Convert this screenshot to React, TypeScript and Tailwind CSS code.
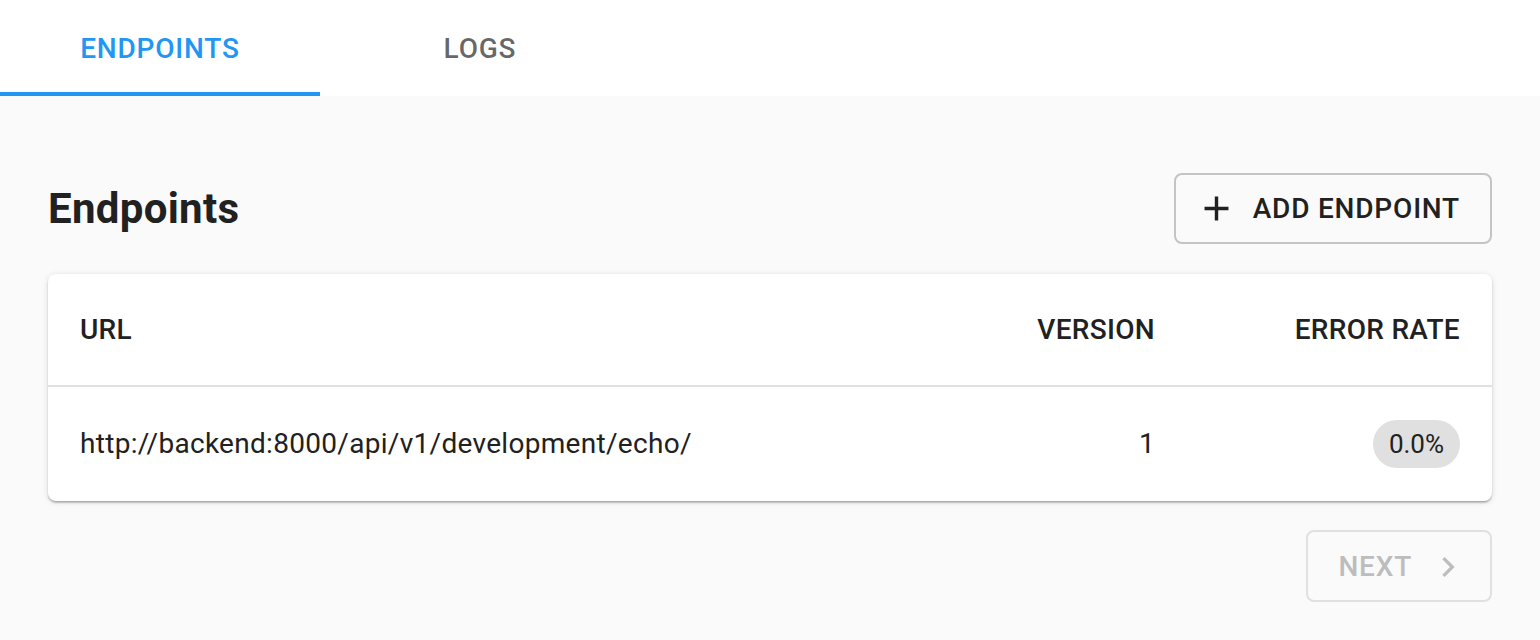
import React from "react";

export default function App() {
  const font = { fontFamily: "Roboto, 'Liberation Sans', sans-serif" };
  return (
    <div className="w-[1540px] h-[640px] bg-[#fafafa] overflow-hidden" style={font}>
      <div className="flex h-[96px] bg-white">
        <div className="relative flex w-[320px] items-center justify-center pt-[2px] text-[28px] font-medium tracking-[0.8px] text-[#2196f3]">
          ENDPOINTS
          <div className="absolute bottom-0 left-0 h-[4px] w-full bg-[#2196f3]" />
        </div>
        <div className="flex w-[320px] items-center justify-center pt-[2px] text-[28px] font-medium tracking-[0.8px] text-[#0009]">
          LOGS
        </div>
      </div>
      <div className="px-[48px] pt-[77px]">
        <div className="flex items-center justify-between">
          <h1 className="text-[42px] font-bold leading-none text-[#212121] tracking-[0.3px]">Endpoints</h1>
          <button className="flex h-[71px] items-center rounded-[8px] border-2 border-[#c4c4c4] pl-[20px] pr-[30px] text-[28px] font-medium tracking-[0.8px] text-[#212121]">
            <svg width="41" height="41" viewBox="0 0 24 24" fill="currentColor" className="mr-[16px]">
              <path d="M19 13h-6v6h-2v-6H5v-2h6V5h2v6h6v2z" />
            </svg>
            ADD ENDPOINT
          </button>
        </div>
        <div className="mt-[30px] rounded-[8px] bg-white shadow-[0_2px_2px_-1px_rgba(0,0,0,0.2),0_2px_2px_0_rgba(0,0,0,0.14),0_1px_6px_0_rgba(0,0,0,0.12)]">
          <div className="flex h-[113px] items-center border-b-2 border-[#e0e0e0] px-[32px] text-[28px] font-medium tracking-[0.3px] text-[#212121]">
            <div className="flex-1">URL</div>
            <div className="w-[300px] text-right">VERSION</div>
            <div className="w-[305px] text-right">ERROR RATE</div>
          </div>
          <div className="flex h-[114px] items-center px-[32px] text-[28px] tracking-[0.3px] text-[#212121]">
            <div className="flex-1">http://backend:8000/api/v1/development/echo/</div>
            <div className="w-[300px] text-right">1</div>
            <div className="flex w-[305px] justify-end">
              <span className="flex h-[48px] items-center rounded-full bg-[#e0e0e0] px-[16px] text-[26px] tracking-normal">0.0%</span>
            </div>
          </div>
        </div>
        <div className="mt-[29px] flex justify-end">
          <button className="flex h-[72px] items-center rounded-[8px] border-2 border-[#e0e0e0] pl-[30px] pr-[22px] pt-[2px] text-[28px] font-medium tracking-[0.8px] text-[#bdbdbd]">
            NEXT
            <svg width="40" height="40" viewBox="0 0 24 24" fill="currentColor" className="ml-[16px]">
              <path d="M10 6 8.59 7.41 13.17 12l-4.58 4.59L10 18l6-6z" />
            </svg>
          </button>
        </div>
      </div>
    </div>
  );
}
